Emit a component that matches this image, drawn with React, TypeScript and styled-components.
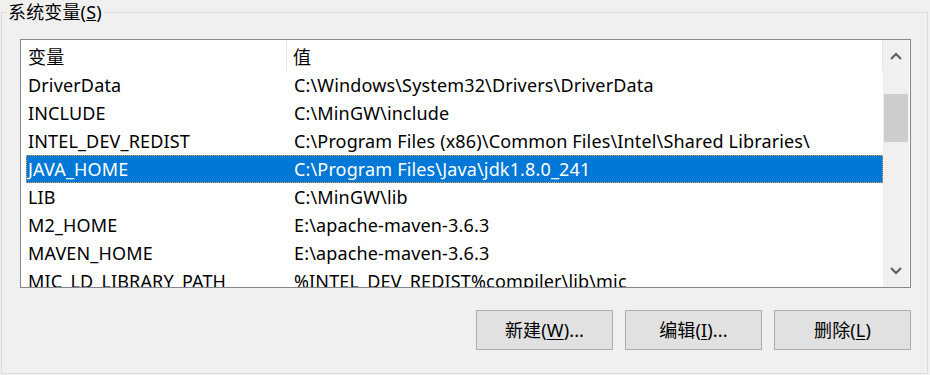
import styled, { createGlobalStyle } from 'styled-components';

const GlobalStyle = createGlobalStyle`
  html, body {
    margin: 0;
    padding: 0;
    background: #f0f0f0;
  }
  body {
    font-family: "Noto Sans", "Noto Sans CJK SC", sans-serif;
    font-size: 18px;
    letter-spacing: 0.15px;
    color: #000;
  }
`;

const Page = styled.div`
  width: 930px;
  height: 375px;
  overflow: hidden;
  background: #f0f0f0;
`;

const GroupBox = styled.fieldset`
  box-sizing: border-box;
  margin: 0 0 0 1px;
  width: 927px;
  height: 374px;
  border: 1px solid #dcdcdc;
  padding: 0 16px 23px 5px;
  display: flex;
  flex-direction: column;
`;

const GroupTitle = styled.legend`
  padding: 0 2px 0 1px;
  line-height: 24px;
  height: 24px;
  font-size: 18px;
`;

const Body = styled.div`
  display: flex;
  flex-direction: column;
  padding: 15px 0 0 13px;
`;

const ListBox = styled.div`
  box-sizing: border-box;
  width: 891px;
  height: 249px;
  border: 1px solid #828790;
  background: #fff;
  display: flex;
`;

const ListArea = styled.div`
  flex: 1;
  overflow: hidden;
  display: flex;
  flex-direction: column;
`;

const HeaderRow = styled.div`
  display: flex;
  height: 31px;
  flex-shrink: 0;
  border-right: 1px solid #e5e5e5;
`;

const HeaderCell = styled.div<{ $width?: number }>`
  ${(p) => (p.$width ? `width: ${p.$width}px;` : 'flex: 1;')}
  box-sizing: border-box;
  display: flex;
  align-items: center;
  padding-left: ${(p) => (p.$width ? 7 : 6)}px;
  border-right: ${(p) => (p.$width ? '1px solid #e5e5e5' : 'none')};
  white-space: nowrap;
`;

const Row = styled.div<{ $selected?: boolean }>`
  display: flex;
  box-sizing: border-box;
  height: 28px;
  flex-shrink: 0;
  margin-left: 5px;
  background: ${(p) => (p.$selected ? '#0078d7' : 'transparent')};
  color: ${(p) => (p.$selected ? '#fff' : '#000')};
  border: 1px ${(p) => (p.$selected ? 'dotted #f0a040' : 'solid transparent')};
`;

const Cell = styled.div<{ $width?: number }>`
  ${(p) => (p.$width ? `width: ${p.$width}px;` : 'flex: 1;')}
  box-sizing: border-box;
  display: flex;
  align-items: center;
  padding-left: 1px;
  padding-bottom: 1px;
  white-space: nowrap;
  overflow: hidden;
`;

const ScrollBar = styled.div`
  width: 26px;
  background: #f0f0f0;
  display: flex;
  flex-direction: column;
  border-right: 1px solid #fff;
`;

const ArrowButton = styled.div`
  height: 32px;
  display: flex;
  align-items: center;
  justify-content: center;
  flex-shrink: 0;
`;

const Track = styled.div`
  flex: 1;
  display: flex;
  flex-direction: column;
  align-items: center;
`;

const Thumb = styled.div`
  width: 24px;
  height: 48px;
  background: #cdcdcd;
`;

const ButtonRow = styled.div`
  display: flex;
  justify-content: flex-end;
  gap: 12px;
  margin-top: 22px;
  width: 891px;
`;

const Button = styled.button`
  box-sizing: border-box;
  width: 137px;
  height: 40px;
  background: #e1e1e1;
  border: 1px solid #adadad;
  font-family: inherit;
  font-size: 18px;
  letter-spacing: 0.15px;
  color: #000;
  padding: 0 0 2px;
  u {
    text-underline-offset: 2px;
  }
`;

const rows: [string, string][] = [
  ['DriverData', 'C:\\Windows\\System32\\Drivers\\DriverData'],
  ['INCLUDE', 'C:\\MinGW\\include'],
  ['INTEL_DEV_REDIST', 'C:\\Program Files (x86)\\Common Files\\Intel\\Shared Libraries\\'],
  ['JAVA_HOME', 'C:\\Program Files\\Java\\jdk1.8.0_241'],
  ['LIB', 'C:\\MinGW\\lib'],
  ['M2_HOME', 'E:\\apache-maven-3.6.3'],
  ['MAVEN_HOME', 'E:\\apache-maven-3.6.3'],
  ['MIC_LD_LIBRARY_PATH', '%INTEL_DEV_REDIST%compiler\\lib\\mic'],
];

const Chevron = ({ up }: { up?: boolean }) => (
  <svg width="12" height="8" viewBox="0 0 12 8">
    <path
      d={up ? 'M1 7 L6 2 L11 7' : 'M1 1 L6 6 L11 1'}
      fill="none"
      stroke="#606060"
      strokeWidth="2.2"
    />
  </svg>
);

export default function App() {
  return (
    <Page>
      <GlobalStyle />
      <GroupBox>
        <GroupTitle>
          系统变量(<u>S</u>)
        </GroupTitle>
        <Body>
          <ListBox>
            <ListArea>
              <HeaderRow>
                <HeaderCell $width={266}>变量</HeaderCell>
                <HeaderCell>值</HeaderCell>
              </HeaderRow>
              {rows.map(([name, value]) => (
                <Row key={name} $selected={name === 'JAVA_HOME'}>
                  <Cell $width={266}>{name}</Cell>
                  <Cell>{value}</Cell>
                </Row>
              ))}
            </ListArea>
            <ScrollBar>
              <ArrowButton>
                <Chevron up />
              </ArrowButton>
              <Track>
                <Thumb style={{ marginTop: 22 }} />
              </Track>
              <ArrowButton>
                <Chevron />
              </ArrowButton>
            </ScrollBar>
          </ListBox>
          <ButtonRow>
            <Button>
              新建(<u>W</u>)...
            </Button>
            <Button>
              编辑(<u>I</u>)...
            </Button>
            <Button>
              删除(<u>L</u>)
            </Button>
          </ButtonRow>
        </Body>
      </GroupBox>
    </Page>
  );
}
